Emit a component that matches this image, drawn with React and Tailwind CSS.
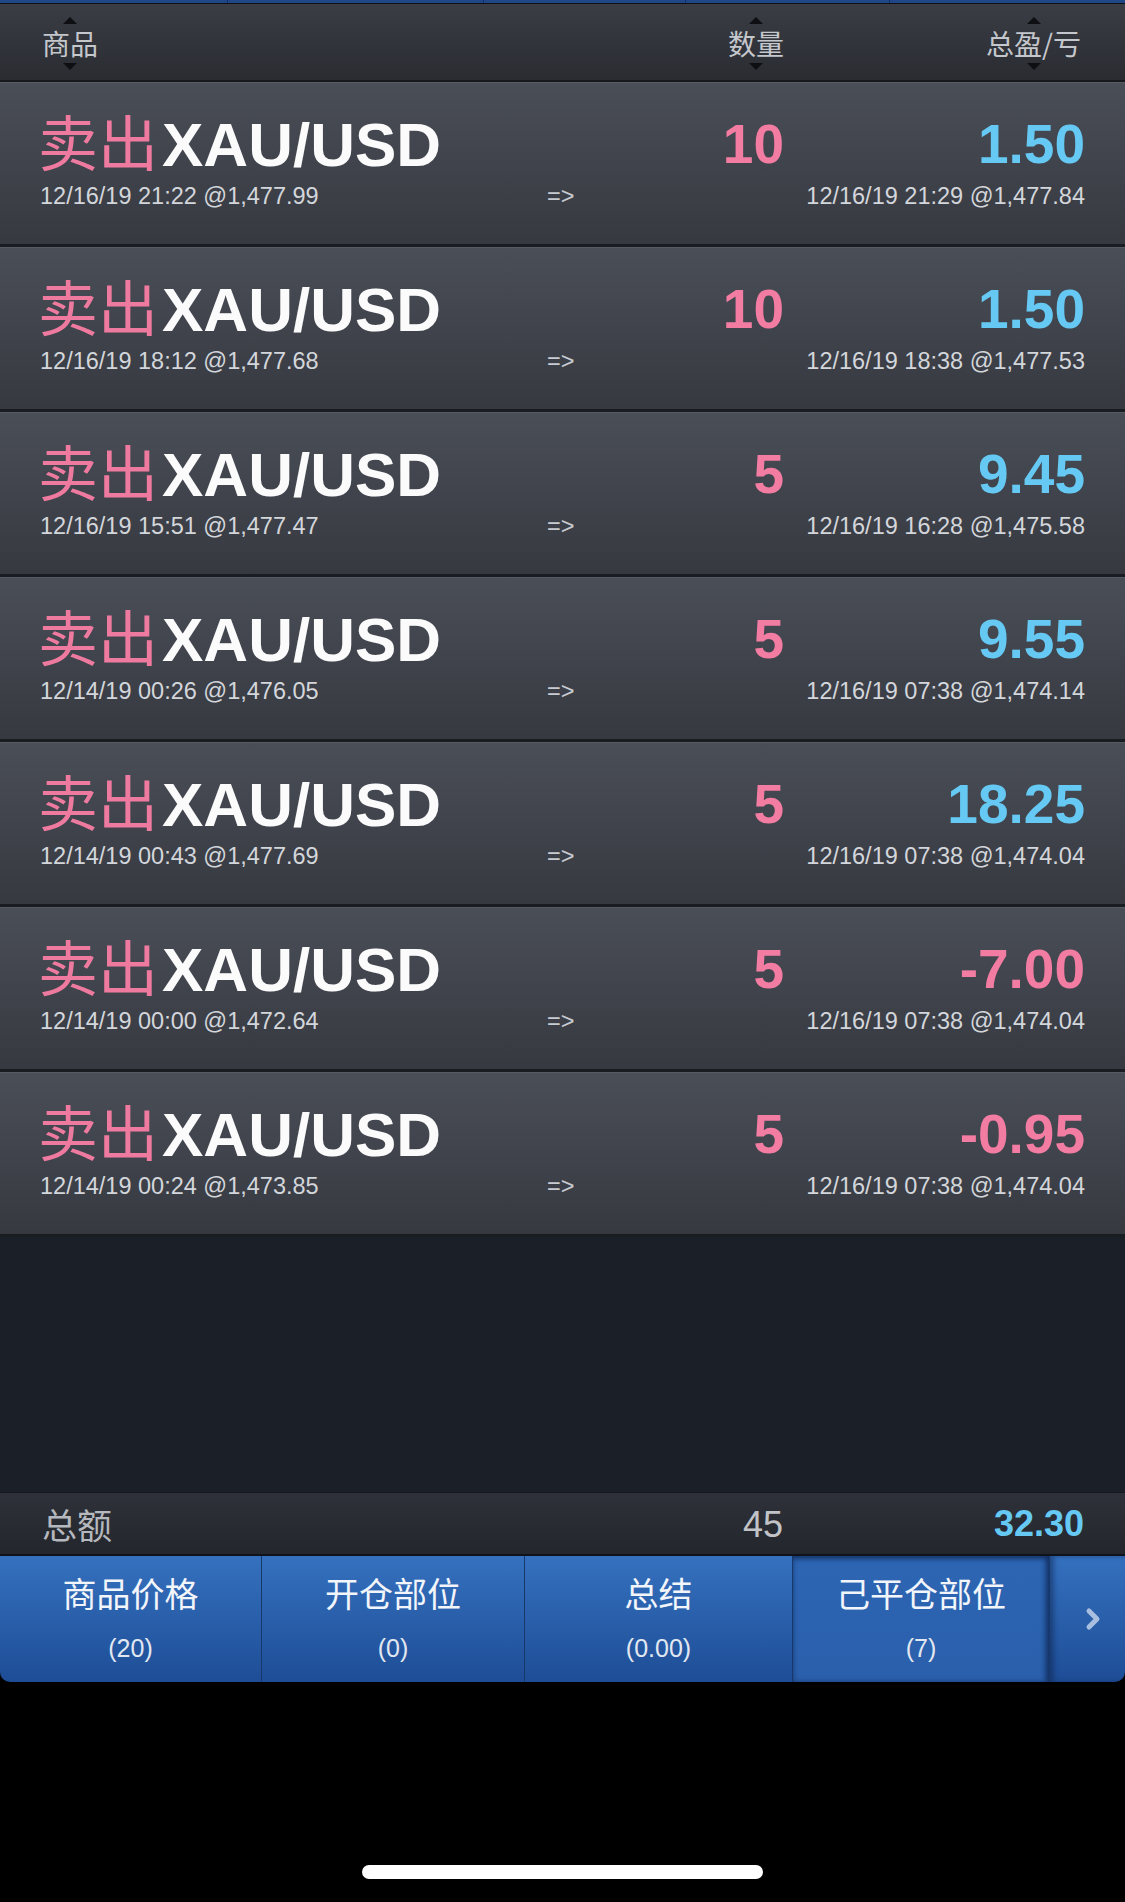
import React from "react";

const trades = [
  { qty: "10", pl: "1.50", open: "12/16/19 21:22 @1,477.99", close: "12/16/19 21:29 @1,477.84" },
  { qty: "10", pl: "1.50", open: "12/16/19 18:12 @1,477.68", close: "12/16/19 18:38 @1,477.53" },
  { qty: "5", pl: "9.45", open: "12/16/19 15:51 @1,477.47", close: "12/16/19 16:28 @1,475.58" },
  { qty: "5", pl: "9.55", open: "12/14/19 00:26 @1,476.05", close: "12/16/19 07:38 @1,474.14" },
  { qty: "5", pl: "18.25", open: "12/14/19 00:43 @1,477.69", close: "12/16/19 07:38 @1,474.04" },
  { qty: "5", pl: "-7.00", open: "12/14/19 00:00 @1,472.64", close: "12/16/19 07:38 @1,474.04" },
  { qty: "5", pl: "-0.95", open: "12/14/19 00:24 @1,473.85", close: "12/16/19 07:38 @1,474.04" },
];

const tabs = [
  { label: "商品价格", count: "(20)", w: "w-[262px]" },
  { label: "开仓部位", count: "(0)", w: "w-[263px]" },
  { label: "总结", count: "(0.00)", w: "w-[268px]" },
  { label: "己平仓部位", count: "(7)", w: "w-[257px]", active: true },
];

const SortArrow = ({ down }) => (
  <svg width="16" height="7" viewBox="0 0 16 7" className="block">
    {down ? (
      <polygon points="1,0 15,0 8,7" fill="#0d0f13" />
    ) : (
      <polygon points="8,0 15,7 1,7" fill="#0d0f13" />
    )}
  </svg>
);

const HeaderCol = ({ label }) => (
  <div className="flex flex-col items-center">
    <SortArrow />
    <span className="mt-[5px] font-['Noto_Sans_CJK_SC',sans-serif] text-[28px] leading-none text-[#c4c7cc]">
      {label}
    </span>
    <div className="mt-[6px]">
      <SortArrow down />
    </div>
  </div>
);

const TradeRow = ({ trade }) => {
  const loss = trade.pl.startsWith("-");
  return (
    <div className="h-[165px] shrink-0 border-b-[3px] border-[#191c21] bg-linear-to-b from-[#4a4e57] to-[#363940] pt-[28px] pl-[38px] pr-[40px] shadow-[inset_0_1px_0_#575b64]">
      <div className="flex items-start">
        <div className="flex flex-1 items-baseline">
          <span className="mr-[4px] font-['Noto_Sans_CJK_SC',sans-serif] text-[60px] leading-none text-[#ee7aa0]">
            卖出
          </span>
          <span className="text-[62px] font-bold leading-none text-[#fbfbfc]">XAU/USD</span>
        </div>
        <span className="mt-[7px] text-[55px] font-bold leading-none text-[#f27ca2]">{trade.qty}</span>
        <span
          className={
            "mt-[7px] w-[301px] text-right text-[55px] font-bold leading-none " +
            (loss ? "text-[#f27ca2]" : "text-[#66c9f3]")
          }
        >
          {trade.pl}
        </span>
      </div>
      <div className="mt-[9px] flex items-baseline text-[23.5px] leading-none text-[#d3d6db]">
        <span className="w-[509px] pl-[2px]">{trade.open}</span>
        <span className="text-[#c8ccd2]">=&gt;</span>
        <span className="flex-1 text-right">{trade.close}</span>
      </div>
    </div>
  );
};

export default function App() {
  return (
    <div className="flex h-[1902px] w-[1125px] flex-col overflow-hidden bg-black font-['Liberation_Sans',sans-serif]">
      {/* scrolled tab strip above */}
      <div className="flex h-[4px] shrink-0 border-b border-[#0f1116] bg-[#1f4687]">
        <div className="w-[228px] border-r border-[#122f66]" />
        <div className="w-[256px] border-r border-[#122f66]" />
        <div className="w-[202px] border-r border-[#122f66]" />
        <div className="w-[204px] border-r border-[#122f66]" />
        <div className="flex-1" />
      </div>

      {/* column header */}
      <div className="flex h-[78px] shrink-0 items-start border-b-2 border-[#16181c] bg-linear-to-b from-[#3a3d44] to-[#2a2c32] pt-[13px] pl-[42px] pr-[44px]">
        <HeaderCol label="商品" />
        <div className="flex-1" />
        <HeaderCol label="数量" />
        <div className="flex w-[297px] justify-end">
          <HeaderCol label="总盈/亏" />
        </div>
      </div>

      {trades.map((t, i) => (
        <TradeRow key={i} trade={t} />
      ))}

      <div className="flex-1 bg-[#1b1f28]" />

      {/* totals */}
      <div className="flex h-[62px] shrink-0 items-center border-t border-[#15181d] bg-linear-to-b from-[#2e3139] to-[#23262c] pl-[42px] pr-[41px]">
        <span className="font-['Noto_Sans_CJK_SC',sans-serif] text-[35px] leading-none text-[#b5b8bd]">总额</span>
        <div className="flex-1" />
        <span className="mt-[3px] text-[36px] leading-none text-[#c2c3c6]">45</span>
        <span className="w-[301px] text-right text-[36px] font-bold leading-none text-[#66c9f3]">32.30</span>
      </div>

      {/* bottom tabs */}
      <div className="flex h-[128px] shrink-0 overflow-hidden rounded-b-[10px] border-t-2 border-[#10131a] bg-linear-to-b from-[#3571bf] to-[#1e4d96]">
        {tabs.map((tab) => (
          <div
            key={tab.label}
            className={
              "flex flex-col items-center border-r border-[#16386b] pt-[20px] " +
              tab.w +
              (tab.active
                ? " bg-linear-to-b from-[#2d66b4] to-[#2a5fab] shadow-[inset_0_3px_5px_rgba(10,30,70,0.55),inset_-4px_0_5px_rgba(10,30,70,0.5)]"
                : "")
            }
          >
            <span className="font-['Noto_Sans_CJK_SC',sans-serif] text-[34px] leading-none text-[#f2f5fa]">
              {tab.label}
            </span>
            <span className="mt-[26px] text-[25px] leading-none text-[#e2e8f1]">{tab.count}</span>
          </div>
        ))}
        <div className="flex flex-1 items-center justify-center pl-[10px] shadow-[inset_4px_0_5px_rgba(10,30,70,0.45)]">
          <svg width="18" height="24" viewBox="0 0 18 24">
            <polyline
              points="5,4 13,12 5,20"
              fill="none"
              stroke="#a9bfdf"
              strokeWidth="5"
              strokeLinecap="round"
              strokeLinejoin="round"
            />
          </svg>
        </div>
      </div>

      {/* home indicator area */}
      <div className="flex h-[220px] shrink-0 justify-center bg-black pt-[183px]">
        <div className="h-[14px] w-[401px] rounded-full bg-white" />
      </div>
    </div>
  );
}
